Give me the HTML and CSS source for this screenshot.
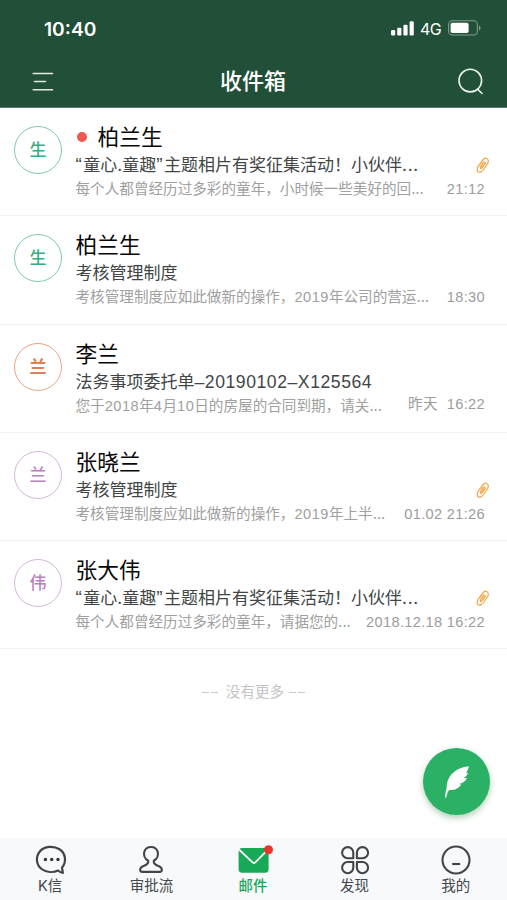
FILE: index.html
```html
<!DOCTYPE html>
<html lang="zh-CN">
<head>
<meta charset="utf-8">
<title>收件箱</title>
<link rel="stylesheet" href="styles.css">
</head>
<body>
<svg class="defs" width="0" height="0">
  <symbol id="clip" viewBox="0 0 14 18">
    <path d="M9.200 6 5.500 11.100c-.6 1.100.6 1.900 1.300.9L10.600 7M8.200 14l4.200-6c1.600-2.600.8-4.900-.8-5.500-1.700-.7-2.800 0-3.700 1.300L3.300 10.200C1.500 12.900 2.100 15.400 3.600 16c1.400.6 2.700-.1 3.400-1.100" fill="none" stroke="currentColor" stroke-width="1.300" stroke-linecap="round"/>
    <path d="M8.300 5 5 9.800" stroke="currentColor" stroke-width=".7"/>
  </symbol>
</svg>
<div class="screen">
  <header class="header">
    <div class="status">
      <span class="clock">10:40</span>
      <div class="signals">
        <svg width="23" height="15" viewBox="0 0 23 15" fill="#fff"><rect x="0" y="9" width="4.200" height="5.500" rx="1.200"/><rect x="6.200" y="6.700" width="4.200" height="7.800" rx="1.200"/><rect x="12.400" y="3.700" width="4.200" height="10.800" rx="1.200"/><rect x="18.600" y=".2" width="4.200" height="14.300" rx="1.200"/></svg>
        <span class="network">4G</span>
        <svg width="33" height="16" viewBox="0 0 33 16"><rect x=".6" y=".8" width="28.800" height="14.200" rx="3.800" fill="none" stroke="#819d8c" stroke-width="1.100"/><rect x="2.600" y="2.800" width="18" height="10.200" rx="1.800" fill="#fff"/><path d="M31 5.500c2 .7 2 4.300 0 5z" fill="#819d8c"/></svg>
      </div>
    </div>
    <nav class="navbar">
      <svg class="menu" width="22" height="20" viewBox="0 0 22 20" stroke="#dfeae3" stroke-width="1.600" stroke-linecap="round"><path d="M1.200 1.500h19.300M2.500 9.500h11M1.200 17.800h19.300"/></svg>
      <h1>收件箱</h1>
      <svg class="search" width="26" height="27" viewBox="0 0 26 27" fill="none" stroke="#eaf2ed" stroke-width="1.600" stroke-linecap="round"><circle cx="12.300" cy="12.600" r="11.300"/><path d="m19.500 21.200 4.600 4.300"/></svg>
    </nav>
  </header>
  <main>
    <article class="mail">
      <div class="avatar green">生</div>
      <div class="body">
        <h2><i class="dot"></i>柏兰生</h2>
        <div class="line subject"><span><i class="quote">“</i>童心.童趣<i class="quote">”</i>主题相片有奖征集活动！小伙伴<i class="more">...</i></span><svg class="clip"><use href="#clip"/></svg></div>
        <div class="line preview"><span>每个人都曾经历过多彩的童年，小时候一些美好的回...</span><time>21:12</time></div>
      </div>
    </article>
    <article class="mail">
      <div class="avatar green">生</div>
      <div class="body">
        <h2>柏兰生</h2>
        <div class="line subject"><span>考核管理制度</span></div>
        <div class="line preview"><span>考核管理制度应如此做新的操作，<b>2019</b>年公司的营运...</span><time>18:30</time></div>
      </div>
    </article>
    <article class="mail">
      <div class="avatar orange">兰</div>
      <div class="body">
        <h2>李兰</h2>
        <div class="line subject"><span>法务事项委托单<b>–20190102–X125564</b></span></div>
        <div class="line preview"><span>您于<b>2018</b>年<b>4</b>月<b>10</b>日的房屋的合同到期，请关...</span><time class="raised">昨天<i class="gap"></i>16:22</time></div>
      </div>
    </article>
    <article class="mail">
      <div class="avatar purple">兰</div>
      <div class="body">
        <h2>张晓兰</h2>
        <div class="line subject"><span>考核管理制度</span><svg class="clip"><use href="#clip"/></svg></div>
        <div class="line preview"><span>考核管理制度应如此做新的操作，<b>2019</b>年上半...</span><time>01.02 21:26</time></div>
      </div>
    </article>
    <article class="mail">
      <div class="avatar purple">伟</div>
      <div class="body">
        <h2>张大伟</h2>
        <div class="line subject"><span><i class="quote">“</i>童心.童趣<i class="quote">”</i>主题相片有奖征集活动！小伙伴<i class="more">...</i></span><svg class="clip"><use href="#clip"/></svg></div>
        <div class="line preview"><span>每个人都曾经历过多彩的童年，请据您的...</span><time>2018.12.18 16:22</time></div>
      </div>
    </article>
    <p class="end"><i class="dash"></i><i class="dash"></i><span>没有更多</span><i class="dash"></i><i class="dash"></i></p>
  </main>
  <button class="compose" aria-label="写邮件">
    <svg width="26" height="34" viewBox="0 0 26 34" fill="#fff"><path d="M24.800 1.200C16 2.200 9 6 5.200 12.500 3 16.500 2.500 20.500 2.600 23.800 1.500 27 1 30 1.200 33.200c1-.5 1.200-1.200 1.400-2 .4-2.700 1.300-4.600 2.600-6.200 4.700.3 9.500-1.400 12.200-5.600l-3-.3c3.600-.6 6.800-2.400 8.600-5.900l-3.500-.1c2-1 3.700-2.800 4.500-5.400l-2.200.1c1.500-1.700 2.700-4 3-6.600z"/></svg>
  </button>
  <footer class="tabs">
    <a class="tab"><svg width="32" height="30" viewBox="0 0 32 30" fill="none" stroke="#414449" stroke-width="2.200" stroke-linejoin="round"><path d="M27 22.600C32 16.500 30.500 8 24.500 4.200 18.500.500 9.500 1 5 6.200c-4.700 5.500-3.900 13.500 1.600 17.800 4.900 3.700 11.600 3.700 16.400 1.500 1.400 1.200 3 2.100 4.900 2.400z"/><g fill="#303338" stroke="none"><circle cx="10.400" cy="14.500" r="1.700"/><circle cx="16.700" cy="14.500" r="1.700"/><circle cx="23" cy="14.500" r="1.700"/></g></svg><span>K信</span></a>
    <a class="tab"><svg width="32" height="30" viewBox="0 0 32 30" fill="none" stroke="#414449" stroke-width="2.100" stroke-linejoin="round"><path d="M12.200 15.700C8.200 13.600 7.600 9.500 8.300 6.800 9.200 3.600 11.800 2 15 2s5.800 1.600 6.700 4.800c.7 2.700.1 6.800-3.900 8.900-.4 3 1 4.100 4.100 5.100 2.600.9 4.100 2.400 3.900 4.300-.1 1.100-.9 1.800-2.100 1.800H6.300c-1.200 0-2-.7-2.100-1.800-.2-1.900 1.300-3.400 3.900-4.300 3.100-1 4.500-2.100 4.100-5.100z"/></svg><span>审批流</span></a>
    <a class="tab active"><svg width="38" height="30" viewBox="0 0 38 30"><rect x="3.600" y="3" width="30" height="24.800" rx="3.500" fill="#17a956"/><path d="m4 4.500 13.300 12.600c1 1 2.300 1 3.300 0L33 4.500" fill="none" stroke="#f8f9fb" stroke-width="1.800"/><circle cx="33.500" cy="4.800" r="4.500" fill="#e8342c"/></svg><span>邮件</span></a>
    <a class="tab"><svg width="32" height="30" viewBox="0 0 32 30" fill="none" stroke="#414449" stroke-width="2.100" stroke-linejoin="round"><path d="M14.300 13.300H8.600a5.600 5.600 0 1 1 5.700-5.600zM17.900 13.300h5.700a5.600 5.600 0 1 0-5.700-5.600zM14.300 17H8.600a5.600 5.600 0 1 0 5.700 5.600zM17.900 17h5.700a5.600 5.600 0 1 1-5.700 5.600z"/></svg><span>发现</span></a>
    <a class="tab"><svg width="32" height="30" viewBox="0 0 32 30" fill="none" stroke="#414449" stroke-width="2.100"><circle cx="16" cy="15" r="13.500"/><path d="M12.200 19h8"/></svg><span>我的</span></a>
  </footer>
</div>
</body>
</html>
```
FILE: styles.css
```css
* { box-sizing: border-box; margin: 0; padding: 0; }
body {
  font-family: Inter, "Noto Sans CJK SC", sans-serif;
  background: #fff;
}
.defs { position: absolute; }
i { font-style: normal; }
svg { display: block; flex: none; }
.screen {
  width: 507px;
  height: 900px;
  display: flex;
  flex-direction: column;
  overflow: hidden;
  background: #fff;
}
.header {
  height: 108px;
  flex: none;
  background: #224f37;
  border-bottom: 1px solid #5b7b69;
  color: #fff;
}
.status {
  height: 56px;
  padding: 0 26px 0 44px;
  display: flex;
  align-items: center;
  justify-content: space-between;
}
.clock { font-size: 19.2px; font-weight: 600; line-height: 24px; padding-top: 1px; }
.signals { display: flex; align-items: center; gap: 6px; }
.network { font-size: 16px; font-weight: 400; line-height: 20px; padding-top: 2px; width: 22px; letter-spacing: -.5px; }
.navbar {
  height: 51px;
  padding: 0 23px 0 32px;
  display: grid;
  grid-template-columns: 26px 1fr 26px;
  align-items: center;
}
.navbar h1 { font-size: 22px; font-weight: 500; line-height: 30px; text-align: center; margin: -1px 10px 0 0; }
.mail {
  height: 108.25px;
  padding: 14px 22px 0 14px;
  display: flex;
  gap: 13.5px;
  border-bottom: 1px solid #f2f2f2;
}
.avatar {
  width: 48px;
  height: 48px;
  flex: none;
  margin-top: 4px;
  border: 1px solid;
  border-radius: 50%;
  text-align: center;
  font-size: 17px;
  font-weight: 500;
  line-height: 47px;
}
.green { color: #35ae84; border-color: #7fcab0; }
.orange { color: #df8050; border-color: #e9a582; font-weight: 700; }
.purple { color: #b780bf; border-color: #d4b7d9; }
.body { flex: 1; min-width: 0; }
h2 {
  display: flex;
  align-items: center;
  font-size: 21.7px;
  font-weight: 400;
  line-height: 30px;
  color: #080808;
}
.dot { width: 10px; height: 10px; margin: 0 11px 0 1px; border-radius: 50%; background: #f0574e; }
.line { display: flex; justify-content: space-between; white-space: nowrap; }
.line b { font-family: "Liberation Sans", sans-serif; font-weight: 400; letter-spacing: .5px; }
.subject { height: 26px; line-height: 27px; font-size: 17px; color: #414645; }
.subject b { font-size: 17.6px; line-height: 20px; letter-spacing: .55px; }
.quote { font-family: "Liberation Sans", sans-serif; font-size: 19px; line-height: 20px; letter-spacing: 1.5px; }
.more { letter-spacing: .7px; }
.preview { height: 22px; line-height: 23px; font-size: 14.6px; color: #a0a0a0; }
.preview time {
  font-family: "Liberation Sans", "Noto Sans CJK SC", sans-serif;
  letter-spacing: .33px;
  color: #9c9c9c;
}
.preview .raised { margin-top: -2px; }
.gap { display: inline-block; width: 9px; }
.clip { width: 14px; height: 18px; margin: 4px -3.5px 0 0; color: #f2a94f; }
.end {
  display: flex;
  align-items: center;
  justify-content: center;
  margin: 32px 0 0 2px;
  font-size: 14.6px;
  line-height: 22px;
  color: #c4c4c4;
}
.end span { margin: 0 5px 0 6px; }
.dash { width: 7px; height: 1px; margin-right: 2px; background: #c8c8c8; }
.compose {
  position: absolute;
  left: 423px;
  top: 748px;
  width: 67px;
  height: 67px;
  display: flex;
  align-items: center;
  justify-content: center;
  border: 0;
  border-radius: 50%;
  background: #2bb165;
  box-shadow: 0 3px 6px rgba(40, 120, 50, .35);
}
.tabs {
  margin-top: auto;
  height: 62px;
  flex: none;
  display: flex;
  background: #f8f9fb;
}
.tab {
  flex: 1;
  display: flex;
  flex-direction: column;
  align-items: center;
  padding-top: 7px;
  font-size: 14.5px;
  line-height: 22px;
  color: #45484c;
}
.tab span { margin-left: -1px; }
.active { color: #26a65b; font-weight: 500; }
```
